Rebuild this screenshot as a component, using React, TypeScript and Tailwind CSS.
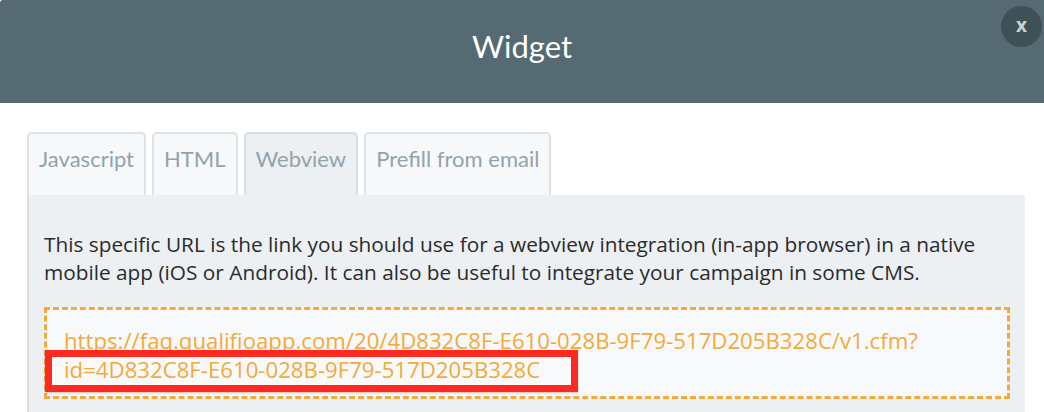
import React from 'react';

const tabs = ['Javascript', 'HTML', 'Webview', 'Prefill from email'];

export default function App() {
  const active = 'Webview';

  return (
    <div className="w-[1044px] h-[412px] overflow-hidden bg-white" style={{ fontFamily: '"Open Sans", sans-serif' }}>
      {/* header */}
      <div className="relative h-[103px] bg-[#556a72] rounded-tl-[3px] flex items-center justify-center">
        <h1 className="text-[31px] text-white font-normal leading-none -mt-[10px]" style={{ fontFamily: 'Lato, sans-serif' }}>
          Widget
        </h1>
        <button className="absolute right-[2px] top-[6px] w-[41px] h-[41px] rounded-full bg-[#3e5157] text-[#c9d1d4] font-bold text-[19px] leading-none flex items-center justify-center pb-[3px]">
          x
        </button>
      </div>

      {/* body */}
      <div className="pt-[29px] pl-[27px] pr-[19px]">
        <div className="flex gap-[6px] items-end" style={{ fontFamily: 'Lato, sans-serif' }}>
          {tabs.map((t) => (
            <div
              key={t}
              className={`h-[63px] px-[10px] pb-[12px] flex items-center border-2 border-b-0 rounded-t-[5px] text-[22px] text-[#93a3ab] ${
                t === active ? 'bg-[#ecf0f3] border-[#d7dfe3]' : 'bg-[#f6f8fa] border-[#dce3e6]'
              }`}
            >
              {t}
            </div>
          ))}
        </div>

        <div className="bg-[#ecf0f3] border-l-2 border-[#d7dfe3] pl-[15px] pr-[15px] pt-[35px] pb-8">
          <p className="text-[20.8px] leading-[28px] text-[#2b2b2b] pr-[16px]">
            This specific URL is the link you should use for a webview integration (in-app browser) in a native mobile app
            (iOS or Android). It can also be useful to integrate your campaign in some CMS.
          </p>

          <div className="relative mt-[21px] border-[3px] border-dashed border-[#f5a93a] bg-[#f8f9fb] pl-[17px] pr-4 pt-[16px] pb-[12px]">
            <p className="text-[22.2px] leading-[29px] text-[#f5a93a]">
              https://faq.qualifioapp.com/20/4D832C8F-E610-028B-9F79-517D205B328C/v1.cfm?
              <wbr />
              id=4D832C8F-E610-028B-9F79-517D205B328C
            </p>
            {/* annotation highlight */}
            <div className="absolute left-[-2px] top-[40px] w-[533px] h-[42px] border-[7px] border-[#fe2a1f] shadow-[inset_0_0_0_1px_rgba(255,255,255,0.9),0_1px_2px_rgba(0,0,0,0.25)]" />
          </div>
        </div>
      </div>
    </div>
  );
}
